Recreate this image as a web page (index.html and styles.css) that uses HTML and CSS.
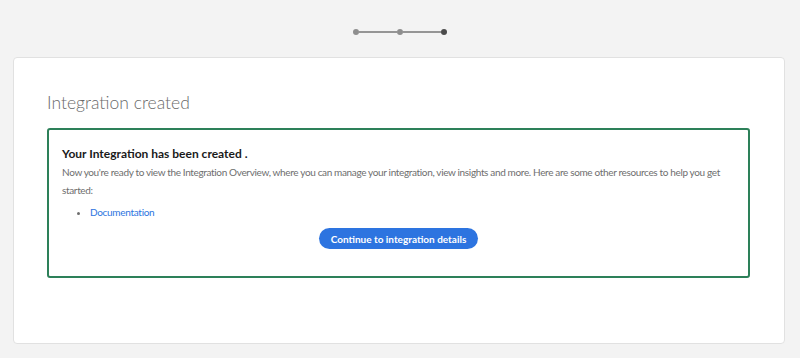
FILE: index.html
```html
<!DOCTYPE html>
<html>
<head>
<meta charset='UTF-8'>
<meta name='viewport' content='width=device-width, initial-scale=1.0'>
<link rel="stylesheet" href="styles.css">
</head>
<body>

<div class="steps">
  <span class="dot"></span>
  <span class="line"></span>
  <span class="dot"></span>
  <span class="line"></span>
  <span class="dot current"></span>
</div>

<div class="card">
  <h2 class="title">Integration created</h2>

  <div class="done">
    <div class="done-head">Your Integration has been created .</div>
    <p class="done-text">Now you're ready to view the Integration Overview, where you can manage your integration, view insights and more. Here are some other resources to help you get started:</p>
    <ul class="links">
      <li><a href="#">Documentation</a></li>
    </ul>
    <div class="actions">
      <button class="go">Continue to integration details</button>
    </div>
  </div>
</div>

</body>
</html>
```

FILE: styles.css
```css
body {
    font-family: Lato, "Open Sans", Arial, sans-serif;
    background: #f3f3f3;
    padding: 0;
    margin: 0;
}

.steps {
    display: flex;
    align-items: center;
    justify-content: center;
    padding: 29px 0 22px 0;
}
.dot {
    width: 6px;
    height: 6px;
    border-radius: 50%;
    background: #8e8e8e;
}
.dot.current {
    background: #4b4b4b;
}
.line {
    width: 38px;
    height: 2px;
    background: #959595;
}

.card {
    margin: 0 15px 0 13px;
    background: white;
    border: 1px solid #e1e1e1;
    border-radius: 4px;
    padding: 33px 34px 65px 33px;
}

.title {
    margin: 0 0 13px 0;
    font-size: 17.5px;
    font-weight: 300;
    color: #6a6a6a;
    line-height: 24px;
}

.done {
    border: 2px solid #2d8059;
    border-radius: 3px;
    padding: 16px 13px 27px 13px;
}
.done-head {
    font-size: 12px;
    font-weight: bold;
    color: #1a1a1a;
    line-height: 16px;
}
.done-text {
    margin: 1px 0 4px 0;
    font-size: 10px;
    letter-spacing: -0.35px;
    color: #6e6e6e;
    line-height: 18px;
}
.links {
    margin: 0;
    padding-left: 28px;
    font-size: 10px;
    letter-spacing: -0.3px;
    line-height: 18px;
    color: #6e6e6e;
}
.links a {
    color: #2b74e0;
    text-decoration: none;
}
.actions {
    display: flex;
    justify-content: center;
    margin-top: 7px;
}
.go {
    font-family: inherit;
    font-size: 10px;
    font-weight: bold;
    color: white;
    background: #2d74e0;
    border: none;
    border-radius: 11px;
    height: 21px;
    padding: 0 12px;
}
```
